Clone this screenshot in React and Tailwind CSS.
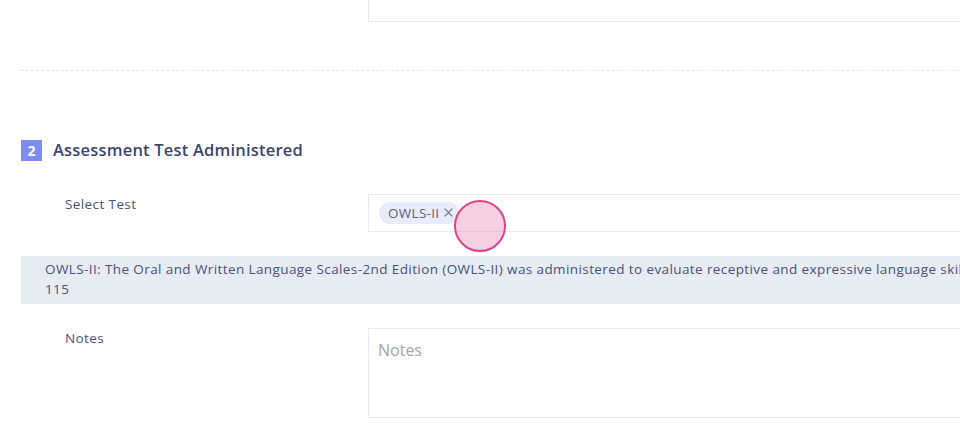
import React from "react";

function FieldRow({ label, children }) {
  return (
    <div className="flex">
      <div className="w-[347px] shrink-0 pl-[44px] text-[13.5px] font-medium leading-[20px] tracking-[0.4px] text-[#47527a]">
        {label}
      </div>
      <div className="flex-1">{children}</div>
    </div>
  );
}

export default function App() {
  return (
    <div className="relative w-[960px] h-[445px] overflow-hidden bg-white font-['Open_Sans',sans-serif]">
      <div className="w-[1400px] pl-[21px]">
        {/* previous field (cut off at top) */}
        <div className="flex">
          <div className="w-[347px] shrink-0" />
          <div className="h-[22px] flex-1 border-x border-b border-[#e8eaf0]" />
        </div>

        <div className="mt-[48px] border-t border-dashed border-[#e2e6f0]" />

        {/* section header */}
        <div className="mt-[67px] flex items-center gap-[11px]">
          <span className="flex h-[21px] w-[21px] items-center justify-center bg-[#7b8cf6] text-[14px] font-bold text-white">
            2
          </span>
          <h2 className="text-[16.5px] font-semibold tracking-[0.2px] text-[#3a4672]">Assessment Test Administered</h2>
        </div>

        <div className="mt-[31px]">
          <FieldRow label="Select Test">
            <div className="flex h-[38px] items-center border border-[#e8eaf0] px-[10px]">
              <span className="flex h-[22px] items-center gap-[5px] rounded-full bg-[#e7ebfa] pl-[9px] pr-[6px] text-[13.5px] tracking-[0.3px] text-[#5d6274]">
                OWLS-II
                <svg width="9" height="9" viewBox="0 0 9 9" fill="none" stroke="#7a7e8b" strokeWidth="1.2" strokeLinecap="round">
                  <path d="M1 1L8 8M8 1L1 8" />
                </svg>
              </span>
            </div>
          </FieldRow>
        </div>

        <div className="mt-[24px] bg-[#e7ebf2] pl-[24px] pt-[3px] pb-[5px] text-[13.5px] font-medium leading-[20px] tracking-[0.4px] text-[#47527a]">
          <div className="whitespace-nowrap">
            OWLS-II: The Oral and Written Language Scales-2nd Edition (OWLS-II) was administered to evaluate receptive and expressive language skills.
          </div>
          <div>115</div>
        </div>

        <div className="mt-[24px]">
          <FieldRow label="Notes">
            <div className="h-[90px] border border-[#e8eaf0] px-[9px] pt-[9px] text-[16px] text-[#a3a5ad]">
              Notes
            </div>
          </FieldRow>
        </div>
      </div>

      {/* click highlight */}
      <div className="absolute left-[454px] top-[200px] h-[52px] w-[52px] rounded-full border-2 border-[#d8458a] bg-[#e88ab2]/40" />
    </div>
  );
}
